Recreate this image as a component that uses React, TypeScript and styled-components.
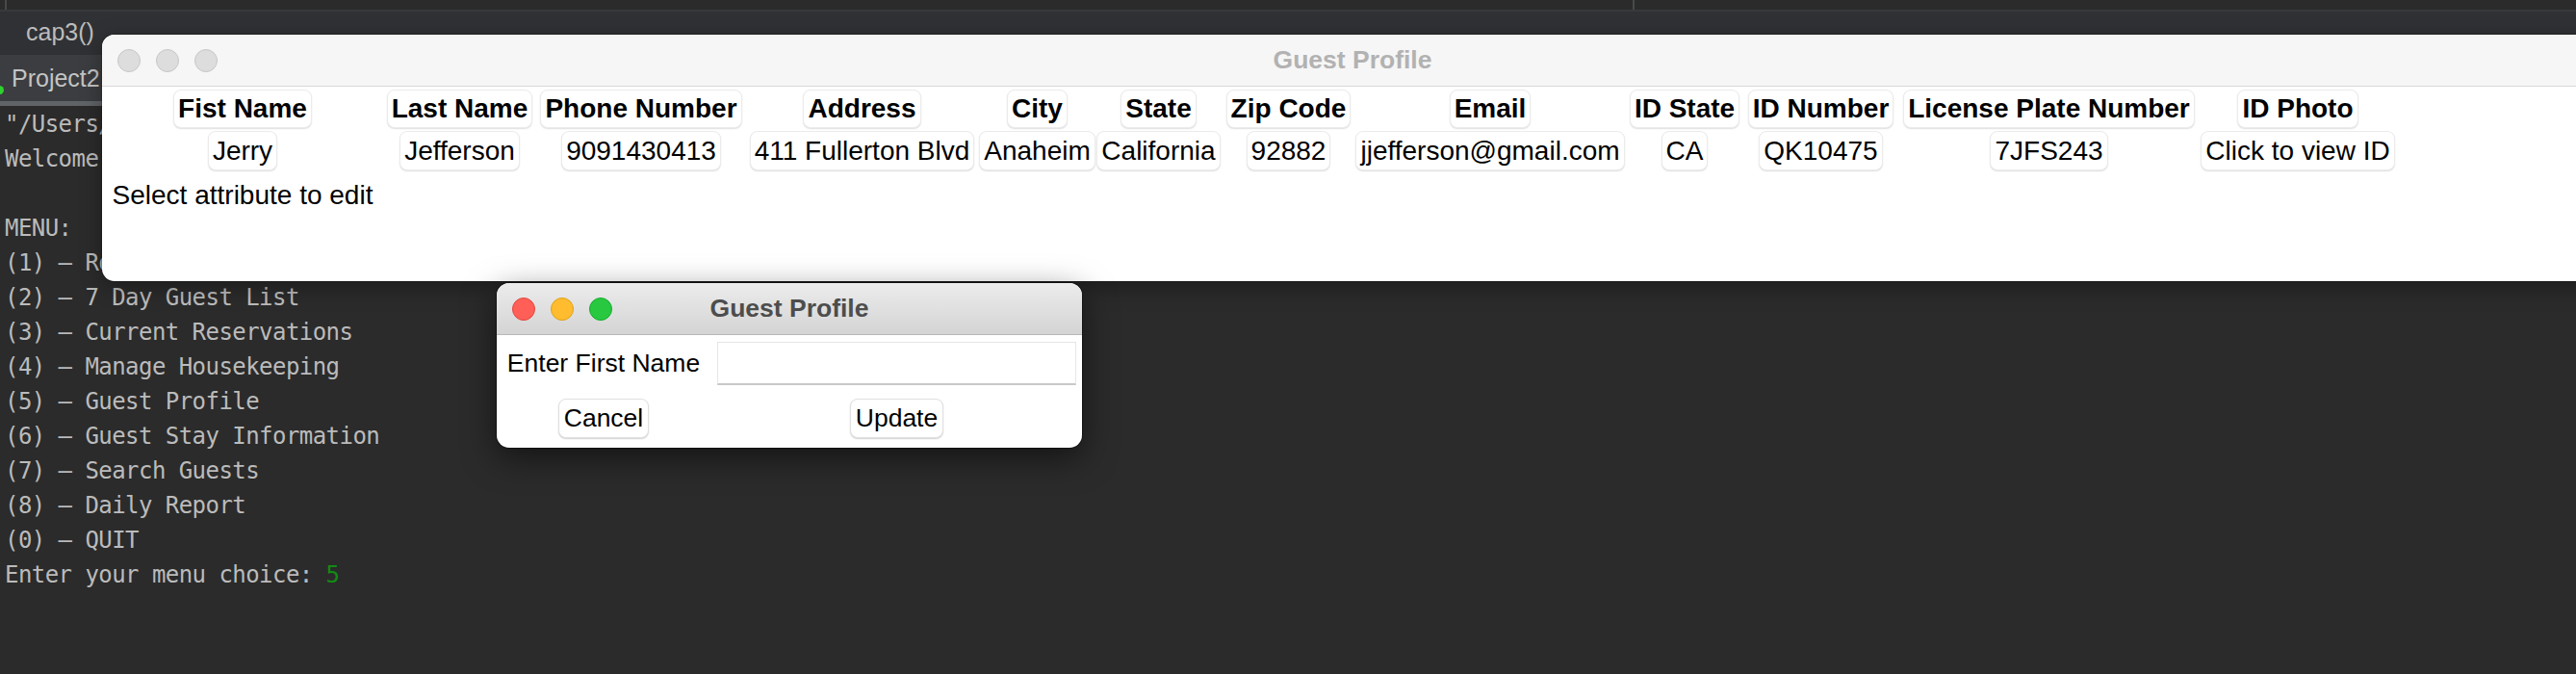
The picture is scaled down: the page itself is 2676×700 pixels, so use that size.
import React from "react";
import styled, { createGlobalStyle } from "styled-components";

const GlobalStyle = createGlobalStyle`
  html, body {
    margin: 0;
    padding: 0;
    background: #2b2b2b;
    overflow: hidden;
  }
  #root {
    width: 2676px;
    height: 700px;
  }
  * { box-sizing: border-box; }
`;

const UI_FONT = `"Liberation Sans", Arial, sans-serif`;
const MONO_FONT = `"DejaVu Sans Mono", "Liberation Mono", monospace`;

/* ---------- IDE background ---------- */

const Desktop = styled.div`
  position: relative;
  width: 2676px;
  height: 700px;
  overflow: hidden;
  background: #2b2b2b;
  display: flex;
  flex-direction: column;
`;

const TopStrip = styled.div`
  height: 12px;
  display: flex;
  background: #2b2b2b;
  border-bottom: 2px solid #38393c;
  flex-shrink: 0;
`;

const StripPane = styled.div<{ $w?: number }>`
  height: 100%;
  width: ${(p) => (p.$w ? `${p.$w}px` : "auto")};
  flex: ${(p) => (p.$w ? "0 0 auto" : "1")};
  border-right: ${(p) => (p.$w ? "2px solid #48494b" : "none")};
`;

const EditorTabs = styled.div`
  height: 45px;
  flex-shrink: 0;
  display: flex;
  align-items: center;
  background: #303134;
  padding-left: 27px;
`;

const EditorTab = styled.span`
  font-family: ${UI_FONT};
  font-size: 25px;
  color: #bcbcbc;
  margin-top: -2px;
`;

const RunBar = styled.div`
  position: relative;
  height: 53px;
  flex-shrink: 0;
  display: flex;
  background: #3b3d40;
`;

const RunTab = styled.div`
  display: flex;
  align-items: center;
  padding-left: 12px;
  width: 100%;
  border-bottom: 5px solid #616467;
  font-family: ${UI_FONT};
  font-size: 25px;
  color: #c4c4c4;
`;

const StatusDot = styled.span`
  position: absolute;
  left: -5px;
  top: 32px;
  width: 9px;
  height: 9px;
  border-radius: 50%;
  background: #2fd12f;
`;

const Console = styled.div`
  flex: 1;
  padding: 1px 0 0 5px;
  font-family: ${MONO_FONT};
  font-size: 24px;
  letter-spacing: -0.55px;
  line-height: 36px;
  color: #bbbbbb;
  white-space: pre;
  overflow: hidden;
`;

const ConsoleLine = styled.div`
  height: 36px;
`;

const UserInput = styled.span`
  color: #138a13;
`;

/* ---------- Mac windows ---------- */

const Window = styled.div<{ $left: number; $top: number; $w: number; $h: number; $active?: boolean }>`
  position: absolute;
  left: ${(p) => p.$left}px;
  top: ${(p) => p.$top}px;
  width: ${(p) => p.$w}px;
  height: ${(p) => p.$h}px;
  border-radius: 13px;
  overflow: hidden;
  background: #ffffff;
  display: flex;
  flex-direction: column;
  box-shadow: ${(p) =>
    p.$active
      ? "0 0 0 1px rgba(0,0,0,0.35), 0 10px 34px rgba(0,0,0,0.55)"
      : "0 0 0 1px rgba(0,0,0,0.2), 0 6px 22px rgba(0,0,0,0.35)"};
`;

const TitleBar = styled.div<{ $active?: boolean }>`
  height: 54px;
  flex-shrink: 0;
  display: grid;
  grid-template-columns: 1fr auto 1fr;
  align-items: center;
  background: ${(p) =>
    p.$active ? "linear-gradient(#ececec, #d4d4d4)" : "#f6f6f6"};
  border-bottom: 1px solid ${(p) => (p.$active ? "#b7b7b7" : "#d8d8d8")};
`;

const Lights = styled.div`
  display: flex;
  gap: 16px;
  padding-left: 16px;
`;

const Light = styled.span<{ $fill: string; $edge: string }>`
  width: 24px;
  height: 24px;
  border-radius: 50%;
  background: ${(p) => p.$fill};
  border: 1px solid ${(p) => p.$edge};
`;

const WindowTitle = styled.div<{ $active?: boolean }>`
  font-family: ${UI_FONT};
  font-weight: bold;
  font-size: 26.5px;
  color: ${(p) => (p.$active ? "#4d4d4d" : "#b2b2b2")};
  white-space: nowrap;
`;

/* ---------- Profile table ---------- */

const ProfileGrid = styled.div`
  display: grid;
  grid-template-columns: 284px 167px 210px 249px 115px 137px 133px 286px 118px 165px 309px 208px;
  grid-template-rows: 40px 41px 46px;
  row-gap: 3px;
  padding: 3px 0 0 4px;
  justify-items: center;
  align-items: center;
`;

const Cell = styled.div<{ $header?: boolean }>`
  height: ${(p) => (p.$header ? 40 : 41)}px;
  padding: 0 4px;
  display: flex;
  align-items: center;
  background: #ffffff;
  border: 1px solid #ebebeb;
  border-radius: 8px;
  box-shadow: 0 1px 1.5px rgba(0, 0, 0, 0.13);
  font-family: ${UI_FONT};
  font-size: 28px;
  font-weight: ${(p) => (p.$header ? "bold" : "normal")};
  color: #000000;
  white-space: nowrap;
`;

const Hint = styled.div`
  grid-column: 1;
  font-family: ${UI_FONT};
  font-size: 28px;
  color: #000000;
  white-space: nowrap;
`;

/* ---------- Edit dialog ---------- */

const DialogBody = styled.div`
  flex: 1;
  display: grid;
  grid-template-columns: 214px 373px;
  grid-template-rows: 45px 41px;
  column-gap: 11px;
  row-gap: 14px;
  padding: 7px 6px 9px 4px;
  justify-items: center;
  align-items: center;
`;

const FieldLabel = styled.label`
  font-family: ${UI_FONT};
  font-size: 26.5px;
  color: #000000;
  white-space: nowrap;
`;

const Entry = styled.input`
  width: 100%;
  height: 45px;
  border: 1px solid #e6e6e6;
  border-bottom: 2px solid #c9c9c9;
  background: #ffffff;
  outline: none;
  font-family: ${UI_FONT};
  font-size: 26px;
`;

const PushButton = styled.button`
  height: 41px;
  padding: 0 5px;
  background: #ffffff;
  border: 1px solid #e0e0e0;
  border-radius: 8px;
  box-shadow: 0 1px 1.5px rgba(0, 0, 0, 0.18);
  font-family: ${UI_FONT};
  font-size: 26.5px;
  color: #000000;
`;

/* ---------- data ---------- */

// The rest of each of the first console lines is hidden behind the Guest Profile window.
const consoleLines = [
  `"/Users/j`,
  "Welcome to",
  "",
  "MENU:",
  "(1) – Room",
  "(2) – 7 Day Guest List",
  "(3) – Current Reservations",
  "(4) – Manage Housekeeping",
  "(5) – Guest Profile",
  "(6) – Guest Stay Information",
  "(7) – Search Guests",
  "(8) – Daily Report",
  "(0) – QUIT",
];

const headers = [
  "Fist Name",
  "Last Name",
  "Phone Number",
  "Address",
  "City",
  "State",
  "Zip Code",
  "Email",
  "ID State",
  "ID Number",
  "License Plate Number",
  "ID Photo",
];

const values = [
  "Jerry",
  "Jefferson",
  "9091430413",
  "411 Fullerton Blvd",
  "Anaheim",
  "California",
  "92882",
  "jjefferson@gmail.com",
  "CA",
  "QK10475",
  "7JFS243",
  "Click to view ID",
];

const inactiveLights = [
  { fill: "#dddddd", edge: "#c7c7c7" },
  { fill: "#dddddd", edge: "#c7c7c7" },
  { fill: "#dddddd", edge: "#c7c7c7" },
];

const activeLights = [
  { fill: "#ff5f57", edge: "#e2463f" },
  { fill: "#febc2e", edge: "#e1a116" },
  { fill: "#28c840", edge: "#14ae2c" },
];

export default function App() {
  return (
    <>
      <GlobalStyle />
      <Desktop>
        <TopStrip>
          <StripPane $w={7} />
          <StripPane $w={1691} />
          <StripPane />
        </TopStrip>
        <EditorTabs>
          <EditorTab>cap3()</EditorTab>
        </EditorTabs>
        <RunBar>
          <StatusDot />
          <RunTab>Project2</RunTab>
        </RunBar>
        <Console>
          {consoleLines.map((l, i) => (
            <ConsoleLine key={i}>{l}</ConsoleLine>
          ))}
          <ConsoleLine>
            Enter your menu choice: <UserInput>5</UserInput>
          </ConsoleLine>
        </Console>

        <Window $left={106} $top={36} $w={2598} $h={256}>
          <TitleBar>
            <Lights>
              {inactiveLights.map((l, i) => (
                <Light key={i} $fill={l.fill} $edge={l.edge} />
              ))}
            </Lights>
            <WindowTitle>Guest Profile</WindowTitle>
          </TitleBar>
          <ProfileGrid>
            {headers.map((h) => (
              <Cell key={h} $header>
                {h}
              </Cell>
            ))}
            {values.map((v) => (
              <Cell key={v}>{v}</Cell>
            ))}
            <Hint>Select attribute to edit</Hint>
          </ProfileGrid>
        </Window>

        <Window $left={516} $top={294} $w={608} $h={171} $active>
          <TitleBar $active>
            <Lights>
              {activeLights.map((l, i) => (
                <Light key={i} $fill={l.fill} $edge={l.edge} />
              ))}
            </Lights>
            <WindowTitle $active>Guest Profile</WindowTitle>
          </TitleBar>
          <DialogBody>
            <FieldLabel htmlFor="first-name">Enter First Name</FieldLabel>
            <Entry id="first-name" type="text" />
            <PushButton>Cancel</PushButton>
            <PushButton>Update</PushButton>
          </DialogBody>
        </Window>
      </Desktop>
    </>
  );
}
